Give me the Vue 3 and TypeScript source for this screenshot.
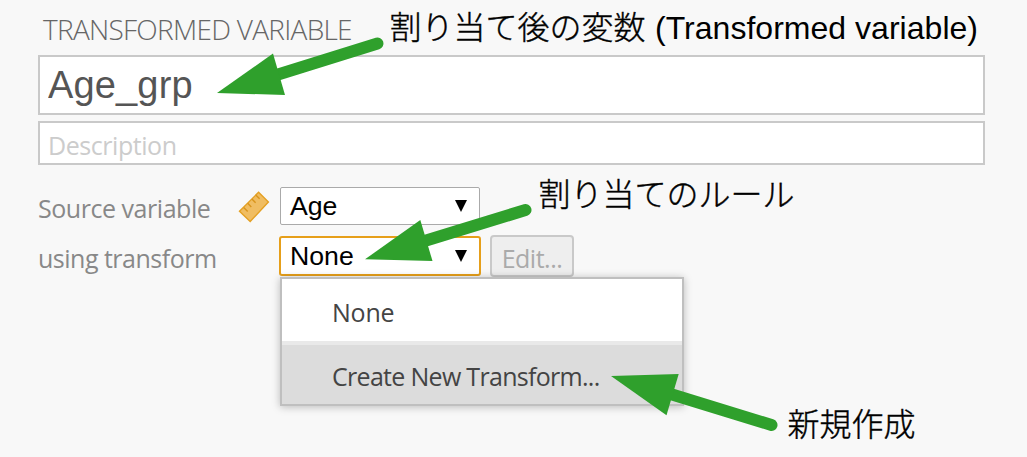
<script setup lang="ts">
import { ref } from 'vue'

interface Arrow {
  shaft: string
  head: string
}

const name = ref('Age_grp')
const description = ref('')

const arrows: Arrow[] = [
  { shaft: 'M377.5 43.5L270 77', head: '217,93 273,53.5 285,95' },
  { shaft: 'M525.5 210L418 243', head: '365,259.3 420.3,220 432.5,261' },
  { shaft: 'M771.5 425L664 392', head: '611,376 678.7,374 666.5,415.3' },
]
</script>

<template>
  <main class="panel">
    <h1 class="title"><span>TRANSFORMED VARIABLE</span></h1>
    <input v-model="name" class="name" spellcheck="false" />
    <input v-model="description" class="description" placeholder="Description" />
    <div class="row source">
      <span class="label source-label">Source variable</span>
      <svg class="ruler" width="32" height="32" viewBox="0 0 32 32">
        <path d="M20.6 1.3L30.4 11L12.2 30.5L1.5 20.2Z" fill="#f0bd62" stroke="#e4a023" stroke-width="1.4" />
        <path d="M5.7 16.5l4 4M9.7 12.2l3.6 3.8M13.9 8l3.7 3.7M18 4.2l3.6 3.5" fill="none" stroke="#d9951d" stroke-width="1.4" />
      </svg>
      <div class="select"><span>Age</span><i class="caret"></i></div>
    </div>
    <div class="row using">
      <span class="label using-label">using transform</span>
      <div class="select active"><span>None</span><i class="caret"></i></div>
      <button class="edit" disabled>Edit...</button>
    </div>
    <div class="menu">
      <div class="item"><span class="none">None</span></div>
      <div class="item selected"><span class="create">Create New Transform...</span></div>
    </div>
    <svg class="notes" width="1027" height="457" viewBox="0 0 1027 457">
      <g v-for="arrow in arrows" :key="arrow.head">
        <path :d="arrow.shaft" fill="none" stroke="#2fa02c" stroke-width="12" stroke-linecap="round" />
        <polygon :points="arrow.head" fill="#2fa02c" />
      </g>
      <text class="jp" x="389.5" y="39">割り当て後の変数</text>
      <text x="655" y="38.5" textLength="323">(Transformed variable)</text>
      <text class="jp" x="538.5" y="205.5">割り当てのルール</text>
      <text class="jp" x="787.5" y="435.5">新規作成</text>
    </svg>
  </main>
</template>

<style>
body {
  margin: 0;
  background: #f8f8f8;
}
</style>

<style scoped>
.panel {
  position: relative;
  box-sizing: border-box;
  width: 1027px;
  height: 457px;
  padding: 0 42px 0 38px;
  overflow: hidden;
  background: #f8f8f8;
  font-family: "Open Sans", "Noto Sans", sans-serif;
}
.title {
  height: 55px;
  margin: 0;
  padding-left: 5px;
  box-sizing: border-box;
  color: #666;
  font-size: 28px;
  font-weight: 300;
  line-height: 58px;
  letter-spacing: -0.72px;
  white-space: nowrap;
}
input {
  display: block;
  box-sizing: border-box;
  width: 947px;
  margin: 0;
  padding: 0 8px;
  border: 2px solid #c9c9c9;
  border-radius: 0;
  background: #fff;
  outline: none;
}
.name {
  height: 60px;
  padding-top: 1px;
  color: #555;
  font: 38px "Liberation Sans", sans-serif;
  letter-spacing: 0.15px;
}
.description {
  height: 44px;
  margin-top: 6px;
  padding-top: 3px;
  color: #555;
  font: 25px "Open Sans", sans-serif;
  letter-spacing: -0.45px;
}
.description::placeholder {
  color: #ccc;
  opacity: 1;
}
.row {
  display: flex;
  align-items: center;
}
.source {
  height: 38px;
  margin-top: 22px;
}
.using {
  height: 42px;
  margin-top: 10px;
}
.label {
  color: #888;
  font-size: 25px;
  line-height: 38px;
  white-space: nowrap;
}
.source-label {
  width: 199px;
  padding-top: 4px;
  letter-spacing: -0.46px;
}
.using-label {
  width: 241px;
  padding-top: 3px;
  letter-spacing: -0.5px;
}
.ruler {
  flex: none;
  margin: 1px 10px 0 1px;
}
.source-label {
  flex: none;
}
.select {
  box-sizing: border-box;
  display: flex;
  align-items: center;
  justify-content: space-between;
  width: 200px;
  height: 38px;
  padding: 0 12px 0 9px;
  border: 1px solid #aaa;
  border-radius: 2px;
  background: #fff;
  color: #000;
  font: 26.67px "Liberation Sans", sans-serif;
}
.select.active {
  width: 202px;
  height: 40px;
  border: 2px solid #e69f1a;
  border-radius: 3px;
}
.caret {
  width: 12px;
  height: 12px;
  background: #000;
  clip-path: polygon(0 0, 100% 0, 50% 100%);
}
.edit {
  box-sizing: border-box;
  width: 84px;
  height: 42px;
  margin-left: 9px;
  padding: 3px 0 0;
  border: 2px solid #c9c9c9;
  border-radius: 4px;
  background: #eee;
  color: #aaa;
  font: 25px "Open Sans", sans-serif;
  letter-spacing: -0.5px;
}
.menu {
  position: absolute;
  top: 277px;
  left: 280px;
  box-sizing: border-box;
  width: 404px;
  height: 129px;
  border: 2px solid #bfbfbf;
  background: #fff;
  box-shadow: 0 1px 8px rgba(0, 0, 0, 0.25);
}
.item {
  box-sizing: border-box;
  height: 62px;
  padding: 0 0 0 50px;
  color: #444;
  font-size: 25px;
  line-height: 66px;
  white-space: nowrap;
}
.none {
  letter-spacing: -0.2px;
}
.selected {
  height: 63px;
  border-top: 4px solid #e9e9e9;
  background: #dcdcdc;
  line-height: 62px;
}
.create {
  letter-spacing: -0.7px;
}
.notes {
  position: absolute;
  top: 0;
  left: 0;
}
.notes text {
  fill: #000;
  font-family: "Liberation Sans", "Noto Sans CJK JP", sans-serif;
  font-size: 32px;
  font-weight: 300;
}
.notes .jp {
  stroke: #000;
  stroke-width: 0.4px;
}
</style>
